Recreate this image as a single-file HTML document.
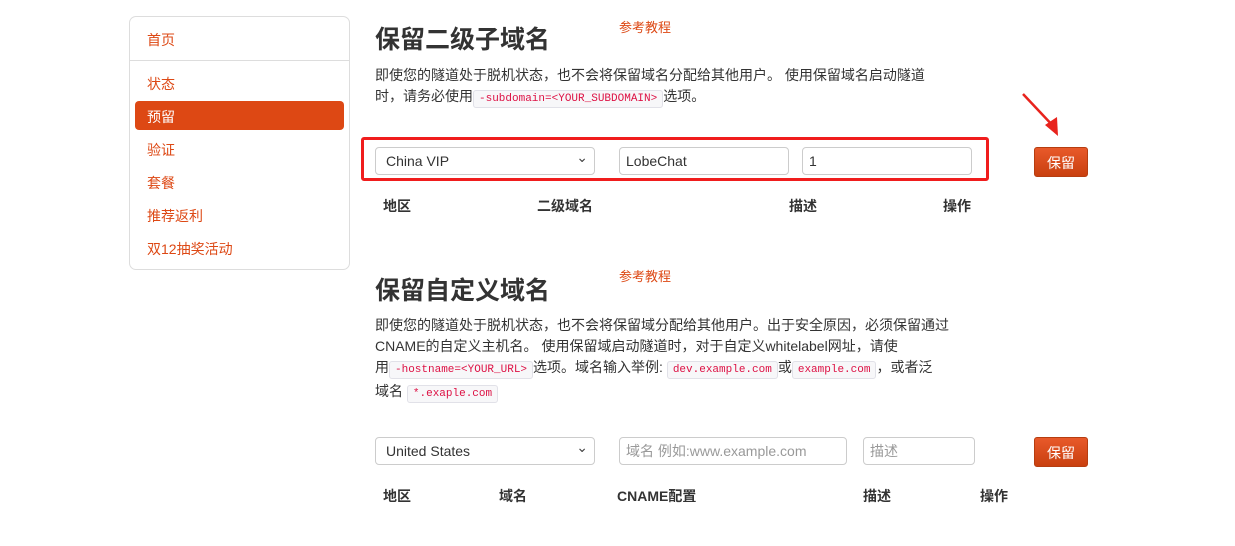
<!DOCTYPE html><html><head><meta charset="utf-8"><style>
body{margin:0;width:1235px;height:546px;background:#fff;font-family:"Liberation Sans","Noto Sans CJK SC",sans-serif;font-size:14px;color:#333;position:relative;overflow:hidden}
.a{position:absolute;white-space:nowrap}
.side{position:absolute;left:129px;top:16px;width:219px;height:252px;border:1px solid #ddd;border-radius:7px}
.nav{position:absolute;left:147px;color:#dd4814;font-size:14px}
.act{position:absolute;left:135px;top:101px;width:209px;height:29px;background:#dd4814;border-radius:4px}
h1{position:absolute;margin:0;font-size:25px;font-weight:bold;color:#333;left:375px}
.ref{position:absolute;color:#dd4814;font-size:13px}
code{font-family:"Liberation Mono",monospace;font-size:11px;color:#dd1144;background:#f7f7f9;border:1px solid #e1e1e8;border-radius:3px;padding:2px 5px}
.p{position:absolute;left:375px;line-height:21px;font-size:14px}
.in{position:absolute;height:28px;border:1px solid #ccc;border-radius:4px;box-sizing:border-box;padding:0 10px;line-height:26px;font-size:14px;background:#fff}
.sel::after{content:"⌄";position:absolute;right:6px;top:-4px;font-size:14px;color:#444}
.btn{position:absolute;width:54px;height:30px;border-radius:3px;background:linear-gradient(#e8592a,#c9400f);color:#fff;text-align:center;line-height:30px;font-size:14px;border:1px solid #b63d10;box-sizing:border-box}
.th{position:absolute;font-weight:bold;font-size:14px}
</style></head><body>
<div class="side"></div>
<div class="a" style="left:129px;top:60px;width:221px;height:1px;background:#ddd"></div>
<div class="act"></div>
<div class="nav" style="top:30px">首页</div>
<div class="nav" style="top:74px">状态</div>
<div class="nav" style="top:107px;color:#fff">预留</div>
<div class="nav" style="top:140px">验证</div>
<div class="nav" style="top:173px">套餐</div>
<div class="nav" style="top:206px">推荐返利</div>
<div class="nav" style="top:239px">双12抽奖活动</div>

<h1 style="top:20px">保留二级子域名</h1>
<div class="ref" style="left:619px;top:17px">参考教程</div>
<div class="p" style="top:65px">即使您的隧道处于脱机状态，也不会将保留域名分配给其他用户。 使用保留域名启动隧道<br>时，请务必使用<code>-subdomain=&lt;YOUR_SUBDOMAIN&gt;</code>选项。</div>
<div class="a" style="left:361px;top:137px;width:622px;height:38px;border:3px solid #f01d1d;border-radius:3px"></div>
<div class="in sel" style="left:375px;top:147px;width:220px">China VIP</div>
<div class="in" style="left:619px;top:147px;width:170px;padding:0 6px">LobeChat</div>
<div class="in" style="left:802px;top:147px;width:170px;padding:0 6px">1</div>
<div class="btn" style="left:1034px;top:147px">保留</div>
<svg class="a" style="left:1015px;top:88px" width="50" height="52"><line x1="8" y1="6" x2="40" y2="40" stroke="#e8231d" stroke-width="2.5"/><polygon points="43,48 30,37 42,29" fill="#e8231d"/></svg>
<div class="th" style="left:383px;top:196px">地区</div>
<div class="th" style="left:537px;top:196px">二级域名</div>
<div class="th" style="left:789px;top:196px">描述</div>
<div class="th" style="left:943px;top:196px">操作</div>

<h1 style="top:271px">保留自定义域名</h1>
<div class="ref" style="left:619px;top:266px">参考教程</div>
<div class="p" style="top:315px">即使您的隧道处于脱机状态，也不会将保留域分配给其他用户。出于安全原因，必须保留通过<br>CNAME的自定义主机名。 使用保留域启动隧道时，对于自定义whitelabel网址，请使<br>用<code>-hostname=&lt;YOUR_URL&gt;</code>选项。域名输入举例: <code>dev.example.com</code>或<code>example.com</code>，或者泛<br>域名 <code>*.exaple.com</code></div>
<div class="in sel" style="left:375px;top:437px;width:220px">United States</div>
<div class="in" style="left:619px;top:437px;width:228px;padding:0 6px;color:#999">域名 例如:www.example.com</div>
<div class="in" style="left:863px;top:437px;width:112px;padding:0 6px;color:#999">描述</div>
<div class="btn" style="left:1034px;top:437px">保留</div>
<div class="th" style="left:383px;top:486px">地区</div>
<div class="th" style="left:499px;top:486px">域名</div>
<div class="th" style="left:617px;top:486px">CNAME配置</div>
<div class="th" style="left:863px;top:486px">描述</div>
<div class="th" style="left:980px;top:486px">操作</div>
</body></html>
